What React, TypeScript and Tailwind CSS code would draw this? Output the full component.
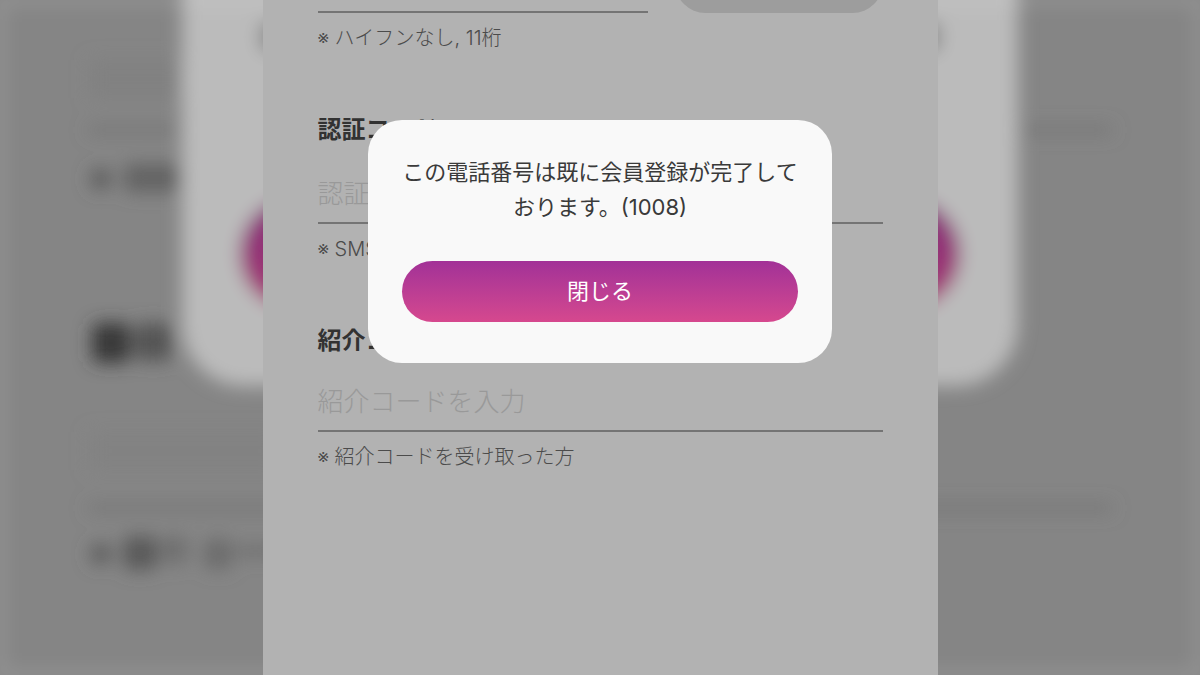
import type { ReactNode } from 'react';

function BlurredBackdrop() {
  return (
    <svg
      aria-hidden="true"
      viewBox="0 0 1200 675"
      preserveAspectRatio="xMidYMid slice"
      className="absolute inset-0 w-full h-full"
    >
      <defs>
        <filter id="soft" x="-10%" y="-10%" width="120%" height="120%">
          <feGaussianBlur stdDeviation="9" />
        </filter>
        <linearGradient id="pink" x1="0" y1="0" x2="0" y2="1">
          <stop offset="0" stopColor="#822a78" />
          <stop offset="1" stopColor="#a83c74" />
        </linearGradient>
      </defs>
      <rect width="1200" height="675" fill="#858585" />
      <g filter="url(#soft)">
        {/* fields behind the dialog */}
        <rect x="90" y="60" width="110" height="38" fill="#818181" />
        <rect x="88" y="127" width="1024" height="6" fill="#707070" />
        <rect x="91" y="169" width="20" height="20" rx="8" fill="#5a5a5a" />
        <rect x="124" y="164" width="62" height="28" rx="6" fill="#646464" />
        <rect x="92" y="323" width="38" height="40" rx="8" fill="#383838" />
        <rect x="134" y="323" width="38" height="38" rx="8" fill="#545454" />
        <rect x="90" y="432" width="190" height="38" fill="#828282" />
        <rect x="88" y="505" width="1024" height="6" fill="#707070" />
        <rect x="91" y="544" width="20" height="20" rx="8" fill="#5a5a5a" />
        <rect x="123" y="536" width="34" height="34" rx="8" fill="#5a5a5a" />
        <rect x="160" y="536" width="28" height="28" rx="8" fill="#707070" />
        <rect x="204" y="539" width="28" height="30" rx="8" fill="#6c6c6c" />
        <rect x="236" y="546" width="40" height="10" fill="#6c6c6c" />
        {/* dialog */}
        <rect x="182" y="-80" width="836" height="466" rx="62" fill="#bbbbbb" />
        <rect x="260" y="22" width="680" height="30" rx="8" fill="#888888" />
        <rect x="240" y="198" width="720" height="112" rx="56" fill="url(#pink)" />
        <rect width="1200" height="675" fill="none" stroke="#ffffff" strokeOpacity="0.15" strokeWidth="8" />
      </g>
    </svg>
  );
}

function Hint({ children }: { children: ReactNode }) {
  return <p className="mt-[9px] text-xl leading-8 font-light text-[#6c6c6c]">※ {children}</p>;
}

type FieldProps = { id: string; label: string; placeholder: string; hint: string; gap: string };

function Field({ id, label, placeholder, hint, gap }: FieldProps) {
  return (
    <div className="mt-[60px]">
      <label htmlFor={id} className="block text-2xl leading-8 font-bold text-[#484848]">
        {label}
      </label>
      <input
        id={id}
        type="text"
        placeholder={placeholder}
        className={`block w-full h-[60px] border-b-2 border-[#a6a6a6] bg-transparent text-[26px] font-light placeholder:text-[#dcdcdc] outline-none ${gap}`}
      />
      <Hint>{hint}</Hint>
    </div>
  );
}

export default function App() {
  return (
    <div
      lang="ja"
      className="relative flex justify-center h-screen overflow-hidden bg-[#858585] font-['Inter','Noto_Sans_CJK_JP',sans-serif]"
    >
      <BlurredBackdrop />
      <main className="relative w-full max-w-[675px] h-full overflow-hidden bg-white">
        <form className="px-[55px]">
          {/* phone row, scrolled mostly out of view */}
          <div className="flex items-end gap-[27px] -mt-12">
            <input
              type="tel"
              aria-label="電話番号"
              className="flex-1 min-w-0 h-[60px] border-b-2 border-[#a6a6a6] bg-transparent text-[26px] outline-none"
            />
            <button type="button" aria-label="送信" className="w-[208px] h-[61px] rounded-full bg-[#e1e1e1]" />
          </div>
          <Hint>ハイフンなし, 11桁</Hint>
          <Field id="code" label="認証コード" placeholder="認証コードを入力" hint="SMSに届いたコード" gap="mt-[18px]" />
          <Field id="invite" label="紹介コード" placeholder="紹介コードを入力" hint="紹介コードを受け取った方" gap="mt-[15px]" />
        </form>
        <div className="absolute inset-0 flex justify-center items-start px-4 pt-[120px] bg-black/30">
          <div
            role="dialog"
            aria-modal="true"
            aria-labelledby="message"
            className="w-full max-w-[464px] px-[34px] pt-[35px] pb-[41px] rounded-[34px] bg-[#f9f9f9]"
          >
            <p id="message" className="text-center text-[22px] leading-[35px] text-[#3a3a3a]">
              この電話番号は既に会員登録が完了しております。(1008)
            </p>
            <button
              type="button"
              className="w-full h-[61px] mt-[36px] rounded-full bg-linear-to-b from-[#a23197] to-[#d6488e] text-[22px] text-white"
            >
              閉じる
            </button>
          </div>
        </div>
      </main>
    </div>
  );
}
